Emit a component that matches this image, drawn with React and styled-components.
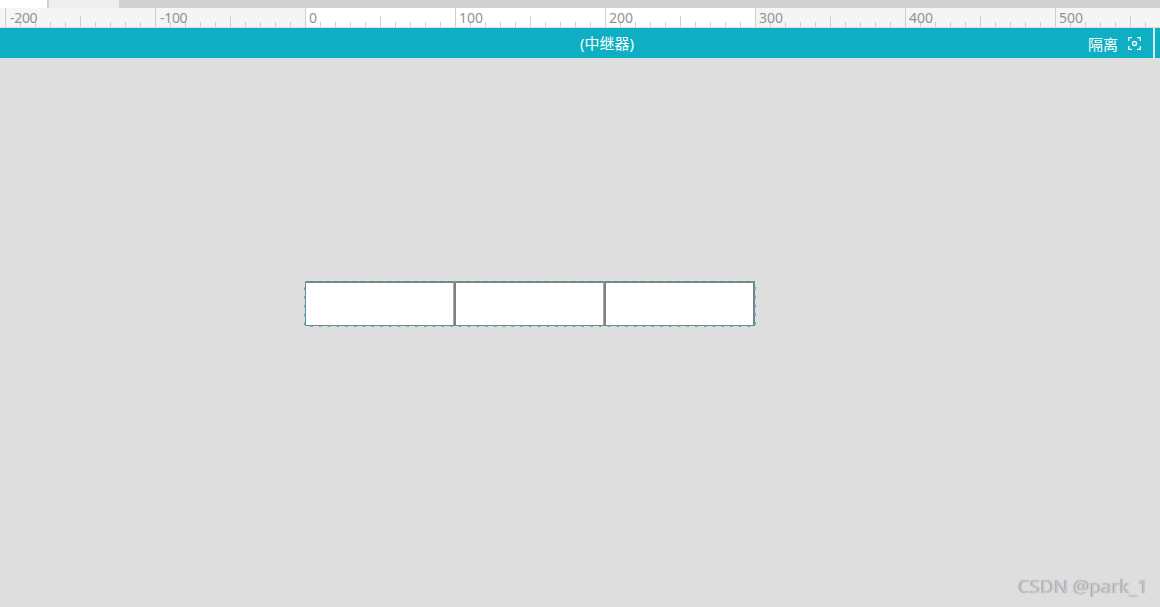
import React from 'react'
import styled, { createGlobalStyle } from 'styled-components'

const Global = createGlobalStyle`
  html, body {
    margin: 0;
    padding: 0;
    background: #dedede;
  }
  body {
    font-family: "Noto Sans", "Noto Sans CJK SC", sans-serif;
  }
`

const Page = styled.div`
  width: 1160px;
  height: 607px;
  display: flex;
  flex-direction: column;
  overflow: hidden;
  position: relative;
  background: #dedede;
`

const TabStrip = styled.div`
  height: 8px;
  display: flex;
  background: #d0d0d0;
  flex: none;
`

const Tab = styled.div`
  width: ${p => p.$width}px;
  margin-right: 2px;
  background: ${p => p.$active ? '#ffffff' : '#eeeeee'};
`

const Ruler = styled.div`
  height: 19px;
  flex: none;
  display: flex;
  padding-left: 5px;
  background: #f5f5f5;
  border-bottom: 1px solid #dcdcdc;
`

const Segment = styled.div`
  position: relative;
  flex: none;
  width: 150px;
  height: 19px;
  display: flex;
  align-items: flex-end;
  background: ${p => p.$inside ? '#ffffff' : 'transparent'};
`

const SegmentLabel = styled.span`
  position: absolute;
  left: ${p => p.$negative ? 5 : 4}px;
  top: 0;
  font-size: 14px;
  letter-spacing: ${p => p.$negative ? '-0.3px' : '0'};
  line-height: 19px;
  color: #939393;
`

const Tick = styled.i`
  flex: none;
  width: 15px;
  box-sizing: border-box;
  height: ${p => p.$size}px;
  border-left: 1px solid #cfcfcf;
`

const Bar = styled.div`
  height: 30px;
  flex: none;
  display: flex;
  align-items: center;
  padding-left: 580px;
  background: #0eafc2;
  color: #ffffff;
  font-size: 15px;
`

const BarTitle = styled.span`
  line-height: 30px;
`

const Isolate = styled.div`
  margin-left: auto;
  margin-right: 5px;
  height: 30px;
  display: flex;
  align-items: center;
  gap: 10px;
  padding-right: 12px;
  border-right: 2px solid #d5f0f4;
  box-sizing: border-box;
`

const Canvas = styled.div`
  flex: 1;
  padding: 223px 0 0 305px;
`

const Repeater = styled.div`
  position: relative;
  width: 450px;
  height: 45px;
  display: flex;
  box-sizing: border-box;
  border-style: solid;
  border-color: #808080;
  border-width: 2px 2px 1px 1px;
  background: #ffffff;
`

const Cell = styled.div`
  flex: none;
  width: 147px;
  margin-left: ${p => p.$first ? '0' : '1px'};
  border-left: ${p => p.$first ? 'none' : '2px solid #808080'};
  box-shadow: ${p => p.$first ? 'none' : '-1px 0 0 #aaaaaa'};
`

const Dashes = styled.svg`
  position: absolute;
  left: -2px;
  top: -3px;
  width: 454px;
  height: 49px;
  pointer-events: none;
`

const Watermark = styled.div`
  position: absolute;
  right: 11px;
  bottom: 8px;
  font-size: 18.7px;
  line-height: 26px;
  color: #cacaca;
  text-shadow: -1px 0 1px #9a9a9a;
`

const scale = [-200, -100, 0, 100, 200, 300, 400, 500]

const FocusIcon = () => (
  <svg width="13" height="13" viewBox="0 0 13 13" fill="none" stroke="#fff" strokeWidth="1.3">
    <path d="M.7 4V.7H4M9 .7h3.3V4M12.3 9v3.3H9M4 12.3H.7V9" />
    <circle cx="6.5" cy="6.5" r="2" />
  </svg>
)

export default function App() {
  return (
    <Page>
      <Global />
      <TabStrip>
        <Tab $width={47} $active />
        <Tab $width={70} />
      </TabStrip>
      <Ruler>
        {scale.map(n => (
          <Segment key={n} $inside={n >= 0 && n < 300}>
            {Array.from({ length: 10 }, (_, i) => (
              <Tick key={i} $size={i === 0 ? 19 : i === 5 ? 11 : 5} />
            ))}
            <SegmentLabel $negative={n < 0}>{n}</SegmentLabel>
          </Segment>
        ))}
      </Ruler>
      <Bar>
        <BarTitle>(中继器)</BarTitle>
        <Isolate>
          <span>隔离</span>
          <FocusIcon />
        </Isolate>
      </Bar>
      <Canvas>
        <Repeater>
          <Cell $first />
          <Cell />
          <Cell />
          <Dashes viewBox="0 0 454 49" fill="none" stroke="#2cb4c6" strokeOpacity="0.9" strokeWidth="2">
            <path d="M1 2H451V46H1Z" strokeDasharray="2.5 6.25" />
          </Dashes>
        </Repeater>
      </Canvas>
      <Watermark>CSDN @park_1</Watermark>
    </Page>
  )
}
